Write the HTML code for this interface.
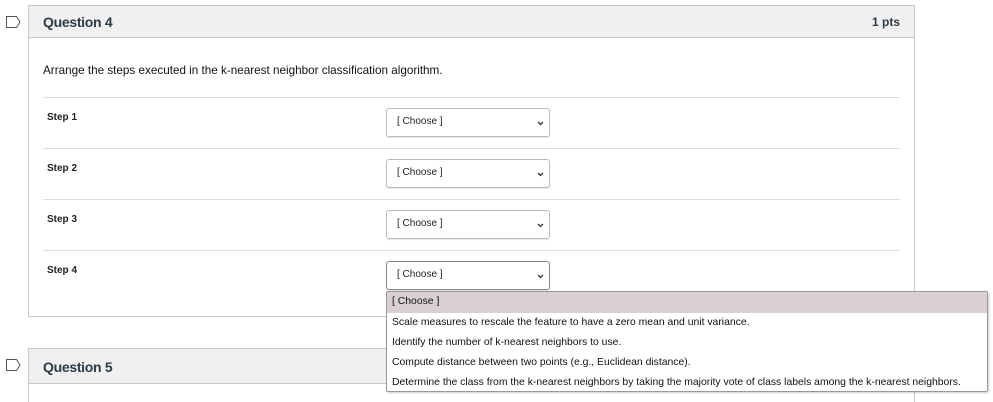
<!DOCTYPE html>
<html style="width:993px;height:402px;overflow:hidden"><head><style>
*{margin:0;padding:0;box-sizing:border-box}
body{width:993px;height:402px;background:#fff;position:relative;overflow:hidden;font-family:"Liberation Sans",sans-serif;color:#222}
.box{position:absolute;left:28px;width:887px;border:1px solid #c7c7c7;background:#fff}
.hdr{height:32px;background:#f0f0f0;border-bottom:1px solid #c7c7c7;position:relative}
.hdr .t{position:absolute;left:14px;top:8px;font-size:14px;font-weight:bold;color:#2d3b45;letter-spacing:-0.3px}
.hdr .p{position:absolute;right:14px;top:9px;font-size:12px;font-weight:bold;color:#2d3b45}
.txt{position:absolute;font-size:11.7px;color:#111}
.line{position:absolute;left:43px;width:857px;height:1px;background:#ddd}
.sel{position:absolute;left:386px;width:164px;height:29px;border:1px solid #bbb;border-radius:3px;background:#fff;font-size:10px;padding:7px 0 0 10px;box-shadow:0 1px 1px #e4e4e4}
.sel svg{position:absolute;right:5px;top:12px}
.step{position:absolute;left:47px;font-size:10px;font-weight:bold}
.dd{position:absolute;left:386px;top:291px;width:602px;height:101px;border:1px solid #999;border-radius:2px;background:#fff;font-size:10.4px;color:#111;box-shadow:1px 1px 2px rgba(0,0,0,.2)}
.dd div{height:20px;padding:4px 0 0 5px;white-space:nowrap}
.dd .h{background:#d9d1d1;height:21px}
.flag{position:absolute;left:6px}
</style></head><body>
<svg class="flag" style="top:16px" width="15" height="12" viewBox="0 0 15 12"><path d="M0.5 0.5H10.5L14 6L10.5 11.5H0.5Z" fill="none" stroke="#555" stroke-width="1"/></svg>
<svg class="flag" style="top:359px" width="15" height="12" viewBox="0 0 15 12"><path d="M0.5 0.5H10.5L14 6L10.5 11.5H0.5Z" fill="none" stroke="#555" stroke-width="1"/></svg>

<div class="box" style="top:5px;height:312px">
<div class="hdr"><span class="t">Question 4</span><span class="p">1 pts</span></div>
</div>
<div class="txt" style="left:43px;top:64px">Arrange the steps executed in the k-nearest neighbor classification algorithm.</div>
<div class="line" style="top:97px"></div>
<div class="line" style="top:148px"></div>
<div class="line" style="top:199px"></div>
<div class="line" style="top:250px"></div>
<div class="step" style="top:112px">Step 1</div>
<div class="step" style="top:163px">Step 2</div>
<div class="step" style="top:214px">Step 3</div>
<div class="step" style="top:265px">Step 4</div>
<div class="sel" style="top:108px">[ Choose ]<svg width="7" height="5"><path d="M1 1L3.5 3.5L6 1" fill="none" stroke="#333" stroke-width="1.3"/></svg></div>
<div class="sel" style="top:159px">[ Choose ]<svg width="7" height="5"><path d="M1 1L3.5 3.5L6 1" fill="none" stroke="#333" stroke-width="1.3"/></svg></div>
<div class="sel" style="top:210px">[ Choose ]<svg width="7" height="5"><path d="M1 1L3.5 3.5L6 1" fill="none" stroke="#333" stroke-width="1.3"/></svg></div>
<div class="sel" style="top:261px;border-color:#888">[ Choose ]<svg width="7" height="5"><path d="M1 1L3.5 3.5L6 1" fill="none" stroke="#333" stroke-width="1.3"/></svg></div>

<div class="box" style="top:348px;height:54px;border-bottom:none">
<div class="hdr" style="height:35px"><span class="t" style="top:10px">Question 5</span></div>
</div>

<div class="dd">
<div class="h">[ Choose ]</div>
<div>Scale measures to rescale the feature to have a zero mean and unit variance.</div>
<div>Identify the number of k-nearest neighbors to use.</div>
<div>Compute distance between two points (e.g., Euclidean distance).</div>
<div>Determine the class from the k-nearest neighbors by taking the majority vote of class labels among the k-nearest neighbors.</div>
</div>
</body></html>
